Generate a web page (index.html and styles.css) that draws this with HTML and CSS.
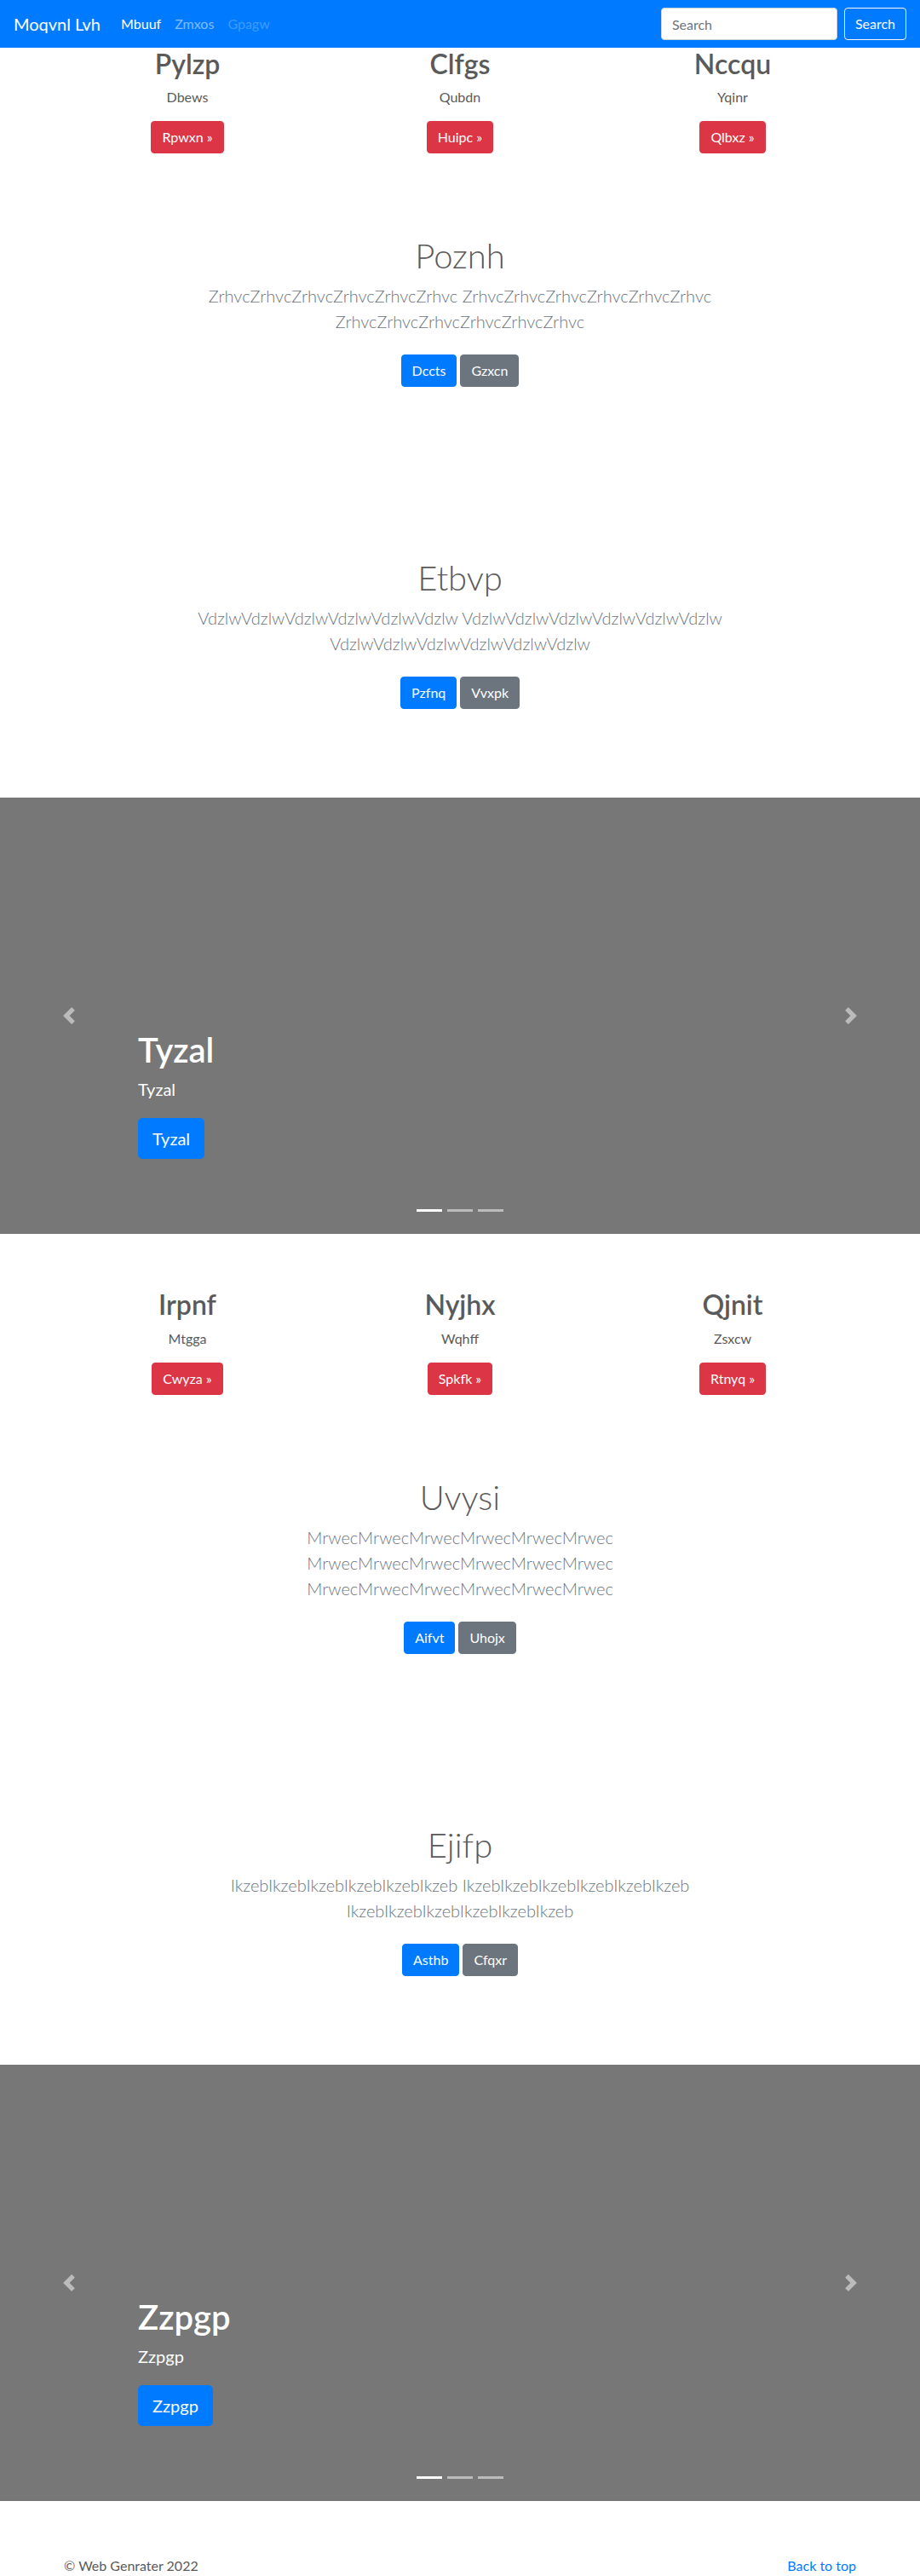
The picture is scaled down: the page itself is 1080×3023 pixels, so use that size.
FILE: index.html
```html
<!DOCTYPE html>
<html lang="en">
<head>
<meta charset="utf-8">
<title>Moqvnl Lvh</title>
<link rel="stylesheet" href="styles.css">
</head>
<body>
<nav class="navbar">
  <a class="brand" href="#">Moqvnl Lvh</a>
  <ul class="nav-links">
    <li><a class="nav-link active" href="#">Mbuuf</a></li>
    <li><a class="nav-link" href="#">Zmxos</a></li>
    <li><a class="nav-link disabled" href="#">Gpagw</a></li>
  </ul>
  <form class="search">
    <input class="search-input" type="text" placeholder="Search">
    <button class="btn btn-outline-light" type="button">Search</button>
  </form>
</nav>

<main>
  <div class="container marketing">
    <div class="col"><h2>Pylzp</h2><p>Dbews</p><div class="cta"><a class="btn btn-danger" href="#">Rpwxn &raquo;</a></div></div>
    <div class="col"><h2>Clfgs</h2><p>Qubdn</p><div class="cta"><a class="btn btn-danger" href="#">Huipc &raquo;</a></div></div>
    <div class="col"><h2>Nccqu</h2><p>Yqinr</p><div class="cta"><a class="btn btn-danger" href="#">Qlbxz &raquo;</a></div></div>
  </div>

  <section class="hero">
    <h1>Poznh</h1>
    <p class="lead"><span class="line">ZrhvcZrhvcZrhvcZrhvcZrhvcZrhvc ZrhvcZrhvcZrhvcZrhvcZrhvcZrhvc</span><span class="line">ZrhvcZrhvcZrhvcZrhvcZrhvcZrhvc</span></p>
    <div class="actions"><a class="btn btn-primary" href="#">Dccts</a><a class="btn btn-secondary" href="#">Gzxcn</a></div>
  </section>

  <section class="hero">
    <h1>Etbvp</h1>
    <p class="lead"><span class="line">VdzlwVdzlwVdzlwVdzlwVdzlwVdzlw VdzlwVdzlwVdzlwVdzlwVdzlwVdzlw</span><span class="line">VdzlwVdzlwVdzlwVdzlwVdzlwVdzlw</span></p>
    <div class="actions"><a class="btn btn-primary" href="#">Pzfnq</a><a class="btn btn-secondary" href="#">Vvxpk</a></div>
  </section>

  <div class="carousel">
    <ol class="indicators"><li class="active"></li><li></li><li></li></ol>
    <a class="control prev" href="#"><svg width="20" height="20" viewBox="0 0 8 8"><path fill="#fff" d="M5.25 0l-4 4 4 4 1.5-1.5L4.25 4l2.5-2.5L5.25 0z"/></svg></a>
    <a class="control next" href="#"><svg width="20" height="20" viewBox="0 0 8 8"><path fill="#fff" d="M2.75 0l-1.5 1.5L3.75 4l-2.5 2.5L2.75 8l4-4-4-4z"/></svg></a>
    <div class="caption">
      <h1>Tyzal</h1>
      <p>Tyzal</p>
      <p><a class="btn btn-lg btn-primary" href="#">Tyzal</a></p>
    </div>
  </div>

  <div class="container marketing">
    <div class="col"><h2>Irpnf</h2><p>Mtgga</p><div class="cta"><a class="btn btn-danger" href="#">Cwyza &raquo;</a></div></div>
    <div class="col"><h2>Nyjhx</h2><p>Wqhff</p><div class="cta"><a class="btn btn-danger" href="#">Spkfk &raquo;</a></div></div>
    <div class="col"><h2>Qjnit</h2><p>Zsxcw</p><div class="cta"><a class="btn btn-danger" href="#">Rtnyq &raquo;</a></div></div>
  </div>

  <section class="hero">
    <h1>Uvysi</h1>
    <p class="lead"><span class="line">MrwecMrwecMrwecMrwecMrwecMrwec</span><span class="line">MrwecMrwecMrwecMrwecMrwecMrwec</span><span class="line">MrwecMrwecMrwecMrwecMrwecMrwec</span></p>
    <div class="actions"><a class="btn btn-primary" href="#">Aifvt</a><a class="btn btn-secondary" href="#">Uhojx</a></div>
  </section>

  <section class="hero">
    <h1>Ejifp</h1>
    <p class="lead"><span class="line">IkzebIkzebIkzebIkzebIkzebIkzeb IkzebIkzebIkzebIkzebIkzebIkzeb</span><span class="line">IkzebIkzebIkzebIkzebIkzebIkzeb</span></p>
    <div class="actions"><a class="btn btn-primary" href="#">Asthb</a><a class="btn btn-secondary" href="#">Cfqxr</a></div>
  </section>

  <div class="carousel">
    <ol class="indicators"><li class="active"></li><li></li><li></li></ol>
    <a class="control prev" href="#"><svg width="20" height="20" viewBox="0 0 8 8"><path fill="#fff" d="M5.25 0l-4 4 4 4 1.5-1.5L4.25 4l2.5-2.5L5.25 0z"/></svg></a>
    <a class="control next" href="#"><svg width="20" height="20" viewBox="0 0 8 8"><path fill="#fff" d="M2.75 0l-1.5 1.5L3.75 4l-2.5 2.5L2.75 8l4-4-4-4z"/></svg></a>
    <div class="caption">
      <h1>Zzpgp</h1>
      <p>Zzpgp</p>
      <p><a class="btn btn-lg btn-primary" href="#">Zzpgp</a></p>
    </div>
  </div>
</main>

<footer class="container footer">
  <p class="back"><a href="#">Back to top</a></p>
  <p>&copy; Web Genrater 2022</p>
</footer>
</body>
</html>
```

FILE: styles.css
```css
* { box-sizing: border-box; }

html, body {
  margin: 0;
  padding: 0;
}

body {
  font-family: Lato, "Open Sans", sans-serif;
  font-size: 16px;
  line-height: 1.5;
  color: #5a5a5a;
  background: #fff;
}

a { text-decoration: none; }

h1, h2, p { margin: 0; }

/* Navbar */
.navbar {
  display: flex;
  align-items: center;
  height: 56px;
  padding: 8px 16px;
  background: #007bff;
}

.brand {
  font-size: 20px;
  line-height: 30px;
  color: #fff;
  margin-right: 16px;
}

.nav-links {
  display: flex;
  list-style: none;
  margin: 0;
  padding: 0;
}

.nav-link {
  display: block;
  padding: 8px;
  color: rgba(255, 255, 255, 0.5);
}

.nav-link.active { color: #fff; }
.nav-link.disabled { color: rgba(255, 255, 255, 0.25); }

.search {
  display: flex;
  align-items: center;
  margin-left: auto;
}

.search-input {
  width: 207px;
  height: 38px;
  padding: 6px 12px;
  margin-right: 8px;
  font: inherit;
  font-size: 16px;
  color: #495057;
  background: #fff;
  border: 1px solid #ced4da;
  border-radius: 4px;
}

.search-input::placeholder { color: #6c757d; }

/* Buttons */
.btn {
  display: inline-block;
  padding: 6px 12px;
  font-family: inherit;
  font-size: 16px;
  line-height: 24px;
  font-weight: 400;
  text-align: center;
  border: 1px solid transparent;
  border-radius: 4px;
  color: #fff;
  background: transparent;
}

.btn-outline-light {
  color: #f8f9fa;
  border-color: #f8f9fa;
}

.btn-danger { background: #dc3545; border-color: #dc3545; }
.btn-primary { background: #007bff; border-color: #007bff; }
.btn-secondary { background: #6c757d; border-color: #6c757d; }

.btn-lg {
  padding: 8px 16px;
  font-size: 20px;
  line-height: 30px;
  border-radius: 5px;
}

/* Marketing columns */
.container {
  width: 960px;
  margin: 0 auto;
}

.marketing {
  display: grid;
  grid-template-columns: repeat(3, 1fr);
}

.marketing .col {
  padding: 0 15px;
  text-align: center;
}

.marketing h2 {
  font-size: 32px;
  line-height: 1.2;
  font-weight: 600;
  margin-bottom: 8px;
}

.marketing p {
  margin: 0 12px 16px;
}

.cta {
  display: flex;
  justify-content: center;
}

/* Hero sections */
.hero {
  padding: 96px 0;
  text-align: center;
}

.hero h1 {
  font-size: 40px;
  line-height: 1.2;
  font-weight: 300;
  margin-bottom: 8px;
}

.lead {
  font-size: 20px;
  line-height: 30px;
  font-weight: 300;
  color: #6c757d;
  margin-bottom: 24px;
}

.line {
  display: block;
  white-space: nowrap;
}

.actions {
  display: flex;
  justify-content: center;
  gap: 4px;
  margin: 0 0 8px;
}

/* Carousel */
.carousel {
  position: relative;
  height: 512px;
  margin-bottom: 64px;
  background: #777;
  overflow: hidden;
}

.control {
  position: absolute;
  top: 0;
  bottom: 0;
  width: 15%;
  display: flex;
  align-items: center;
  justify-content: center;
  opacity: 0.5;
}

.control.prev { left: 0; }
.control.next { right: 0; }

.indicators {
  position: absolute;
  left: 0;
  right: 0;
  bottom: 0;
  display: flex;
  justify-content: center;
  margin: 0 15% 16px;
  padding: 0;
  list-style: none;
}

.indicators li {
  box-sizing: content-box;
  width: 30px;
  height: 3px;
  margin: 0 3px;
  background: #fff;
  background-clip: padding-box;
  border-top: 10px solid transparent;
  border-bottom: 10px solid transparent;
  opacity: 0.5;
}

.indicators li.active { opacity: 1; }

.caption {
  position: absolute;
  left: 15%;
  right: 15%;
  bottom: 48px;
  padding: 20px 0;
  color: #fff;
  text-align: left;
}

.caption h1 {
  font-size: 40px;
  line-height: 1.2;
  font-weight: 600;
  margin-bottom: 8px;
}

.caption p {
  font-size: 20px;
  line-height: 28px;
  margin-bottom: 20px;
}

/* Footer */
.footer {
  padding: 0 15px;
}

.footer p { margin-bottom: 16px; }

.back { float: right; }
.back a { color: #007bff; }
```
